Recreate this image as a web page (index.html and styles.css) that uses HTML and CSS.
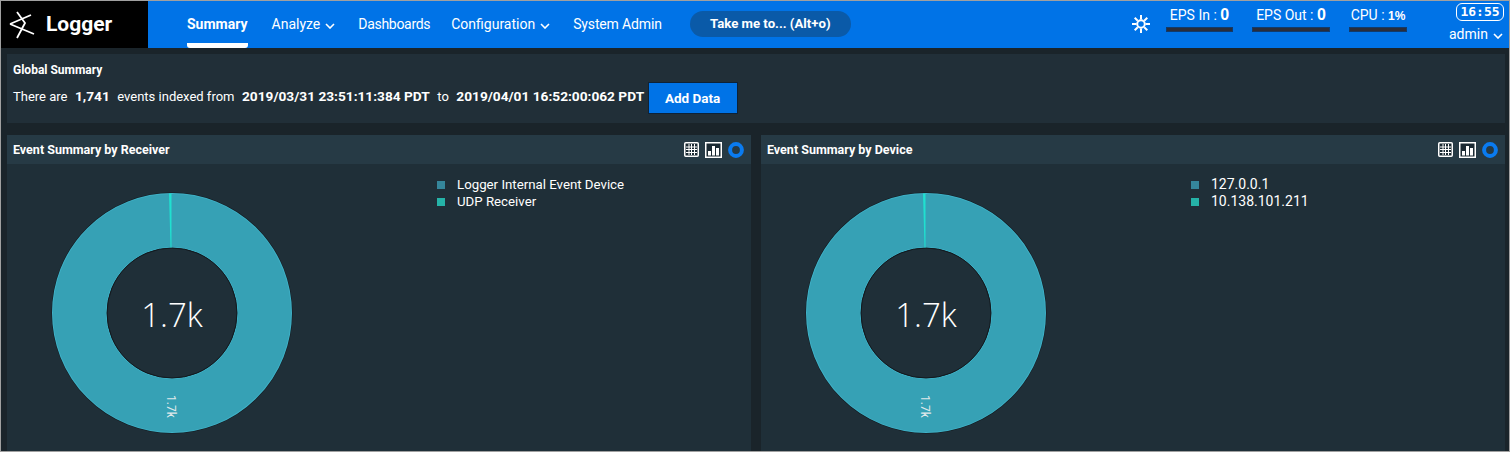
FILE: index.html
```html
<!DOCTYPE html>
<html lang="en">
<head>
    <meta charset="UTF-8">
    <meta name="viewport" content="width=device-width, initial-scale=1.0">
    <title>Logger Summary</title>
    <link rel="stylesheet" href="styles.css">
</head>
<body>
    <header class="topbar">
        <div class="brand">
            <svg class="brand-mark" width="26" height="28" viewBox="0 0 26 28">
                <path d="M1 13 L22 4 M1 13 L25 23 M8 1 L16 12 L8 27" fill="none" stroke="#fff" stroke-width="1.8"/>
            </svg>
            <span class="brand-name">Logger</span>
        </div>
        <nav class="nav">
            <a class="nav-item active">Summary</a>
            <a class="nav-item">Analyze <svg class="chev" width="10" height="6" viewBox="0 0 10 6"><path d="M1 1 L5 5 L9 1" fill="none" stroke="#fff" stroke-width="1.6"/></svg></a>
            <a class="nav-item nav-tight">Dashboards</a>
            <a class="nav-item">Configuration <svg class="chev" width="10" height="6" viewBox="0 0 10 6"><path d="M1 1 L5 5 L9 1" fill="none" stroke="#fff" stroke-width="1.6"/></svg></a>
            <a class="nav-item nav-last">System Admin</a>
        </nav>
        <button class="jump">Take me to... (Alt+o)</button>
        <div class="status">
            <svg class="sun" width="18" height="18" viewBox="0 0 20 20">
                <circle cx="10" cy="10" r="4.2" fill="none" stroke="#fff" stroke-width="2.2"/>
                <path d="M10 0 V5 M10 15 V20 M0 10 H5 M15 10 H20 M3 3 L6.4 6.4 M13.6 13.6 L17 17 M3 17 L6.4 13.6 M13.6 6.4 L17 3" stroke="#fff" stroke-width="2.2"/>
            </svg>
            <div class="meter meter-in">
                <div class="meter-label">EPS In : <b class="digits">0</b></div>
                <div class="meter-bar"></div>
            </div>
            <div class="meter meter-out">
                <div class="meter-label">EPS Out : <b class="digits">0</b></div>
                <div class="meter-bar"></div>
            </div>
            <div class="meter meter-cpu">
                <div class="meter-label">CPU : <b class="digits digits-cpu">1%</b></div>
                <div class="meter-bar"></div>
            </div>
            <div class="user">
                <div class="clock">16:55</div>
                <div class="admin">admin <svg class="chev" width="10" height="6" viewBox="0 0 10 6"><path d="M1 1 L5 5 L9 1" fill="none" stroke="#fff" stroke-width="1.6"/></svg></div>
            </div>
        </div>
    </header>

    <main class="content">
        <section class="global">
            <h2 class="global-title">Global Summary</h2>
            <div class="global-line">
                <span>There are</span>
                <b>1,741</b>
                <span>events indexed from</span>
                <b>2019/03/31 23:51:11:384 PDT</b>
                <span>to</span>
                <b>2019/04/01 16:52:00:062 PDT</b>
                <button class="add-data">Add Data</button>
            </div>
        </section>

        <div class="panels">
            <section class="panel">
                <div class="panel-head">
                    <h3 class="panel-title">Event Summary by Receiver</h3>
                    <svg class="tool" width="15" height="15" viewBox="0 0 15 15"><rect x="0.75" y="0.75" width="13.5" height="13.5" rx="1" fill="#1b2a33" stroke="#fff" stroke-width="1.5"/><path d="M2 5 H13 M2 7.5 H13 M2 10.5 H13 M5 2 V13 M7.5 2 V13 M10.5 2 V13" fill="none" stroke="#fff"/></svg>
                    <svg class="tool" width="17" height="16" viewBox="0 0 17 16"><rect x="0.75" y="0.75" width="15.5" height="14.5" fill="#1b2a33" stroke="#fff" stroke-width="1.5"/><path d="M3 9 H6 V13.5 H3 Z M7 4 H10 V13.5 H7 Z M11 6 H14 V13.5 H11 Z" fill="#fff"/></svg>
                    <svg class="tool" width="16" height="16" viewBox="0 0 16 16"><circle cx="8" cy="8" r="5.9" fill="none" stroke="#0a7bf0" stroke-width="4"/></svg>
                </div>
                <div class="panel-body">
                    <svg class="donut" width="242" height="242" viewBox="0 0 242 242">
                        <circle cx="121" cy="121" r="120.5" fill="#12191e"/>
                        <circle cx="121" cy="121" r="92.5" fill="none" stroke="#3fb0c6" stroke-width="55"/>
                        <circle cx="121" cy="121" r="92.5" fill="none" stroke="#36a1b5" stroke-width="53"/>
                        <circle cx="121" cy="121" r="65" fill="#1f2f38" stroke="#12191e"/>
                        <path d="M118 1.5 L120.5 1.5 L120.5 55.5 L119.5 55.5 Z" fill="#20e0d0"/>
                        <text class="donut-total" x="121" y="135" text-anchor="middle">1.7k</text>
                        <text class="donut-label" transform="translate(116 203) rotate(90)">1.7k</text>
                    </svg>
                    <ul class="legend">
                        <li><i class="swatch swatch-a"></i>Logger Internal Event Device</li>
                        <li><i class="swatch swatch-b"></i>UDP Receiver</li>
                    </ul>
                </div>
            </section>
            <section class="panel">
                <div class="panel-head">
                    <h3 class="panel-title">Event Summary by Device</h3>
                    <svg class="tool" width="15" height="15" viewBox="0 0 15 15"><rect x="0.75" y="0.75" width="13.5" height="13.5" rx="1" fill="#1b2a33" stroke="#fff" stroke-width="1.5"/><path d="M2 5 H13 M2 7.5 H13 M2 10.5 H13 M5 2 V13 M7.5 2 V13 M10.5 2 V13" fill="none" stroke="#fff"/></svg>
                    <svg class="tool" width="17" height="16" viewBox="0 0 17 16"><rect x="0.75" y="0.75" width="15.5" height="14.5" fill="#1b2a33" stroke="#fff" stroke-width="1.5"/><path d="M3 9 H6 V13.5 H3 Z M7 4 H10 V13.5 H7 Z M11 6 H14 V13.5 H11 Z" fill="#fff"/></svg>
                    <svg class="tool" width="16" height="16" viewBox="0 0 16 16"><circle cx="8" cy="8" r="5.9" fill="none" stroke="#0a7bf0" stroke-width="4"/></svg>
                </div>
                <div class="panel-body">
                    <svg class="donut" width="242" height="242" viewBox="0 0 242 242">
                        <circle cx="121" cy="121" r="120.5" fill="#12191e"/>
                        <circle cx="121" cy="121" r="92.5" fill="none" stroke="#3fb0c6" stroke-width="55"/>
                        <circle cx="121" cy="121" r="92.5" fill="none" stroke="#36a1b5" stroke-width="53"/>
                        <circle cx="121" cy="121" r="65" fill="#1f2f38" stroke="#12191e"/>
                        <path d="M118 1.5 L120.5 1.5 L120.5 55.5 L119.5 55.5 Z" fill="#20e0d0"/>
                        <text class="donut-total" x="121" y="135" text-anchor="middle">1.7k</text>
                        <text class="donut-label" transform="translate(116 203) rotate(90)">1.7k</text>
                    </svg>
                    <ul class="legend legend-ip">
                        <li><i class="swatch swatch-a"></i>127.0.0.1</li>
                        <li><i class="swatch swatch-b"></i>10.138.101.211</li>
                    </ul>
                </div>
            </section>
        </div>
    </main>
</body>
</html>
```
FILE: styles.css
```css
* { box-sizing: border-box; }
html, body { height: 100%; }
body { margin: 0; height: 452px; overflow: hidden; border: 1px solid #a0a0a0; background: #1a242a; color: #fff; font-family: Roboto, Arial, sans-serif; font-size: 13px; }

.topbar { display: flex; align-items: stretch; height: 47px; background: #0073e7; }
.brand { display: flex; align-items: center; width: 147px; padding-left: 8px; background: #000; }
.brand-name { margin: 0 0 1px 11px; font-size: 21px; font-weight: 700; }
.nav { display: flex; margin-left: 39px; }
.nav-item { display: flex; align-items: center; margin-right: 22px; padding-top: 4px; font-size: 14px; border-bottom: 5px solid transparent; }
.nav-item.active { margin-right: 24px; font-weight: 700; border-bottom-color: #fff; border-radius: 3px; }
.nav-tight { margin-right: 21px; letter-spacing: -0.3px; }
.nav-last { margin-right: 0; letter-spacing: -0.15px; }
.chev { margin: 4px 1px 0 5px; }
.jump { align-self: center; width: 161px; height: 26px; margin-left: 28px; margin-bottom: 2px; border: 0; border-radius: 13px; background: #0a5aa8; color: #fff; font: 700 13.2px Roboto, Arial, sans-serif; }

.status { display: flex; margin-left: auto; margin-right: 3px; }
.sun { margin: 14px 16px 0 0; }
.meter { margin-right: 19px; padding-top: 4px; }
.meter-in { width: 67px; }
.meter-out { width: 78px; }
.meter-cpu { width: 58px; margin-right: 43px; }
.meter-label { height: 22px; font-size: 14px; line-height: 20px; white-space: nowrap; text-align: center; }
.digits { font-family: "Liberation Sans", sans-serif; font-size: 16px; }
.digits-cpu { font-size: 12px; }
.meter-bar { height: 5px; background: #2a2d3a; border: 1px solid #123a6a; }
.user { width: 56px; padding-top: 2px; }
.clock { height: 18px; margin: 0 2px 0 6px; border: 1px solid #fff; border-radius: 6px; font: 700 13px/16px "DejaVu Sans Mono", monospace; text-align: center; }
.admin { margin: 5px 0 0 -1px; font-size: 14px; white-space: nowrap; }
.admin .chev { margin-left: 2px; }

.content { padding: 6px 4px 0 6px; }
.global { height: 69px; padding: 9px 6px; background: #212f38; }
.global-title { margin: 0; font-size: 12px; font-weight: 700; line-height: 15px; }
.global-line { display: flex; align-items: center; gap: 7.5px; margin-top: 4px; font-size: 13px; }
.global-line span, .global-line b { margin-bottom: 4px; }
.global-line b { font-size: 13.7px; }
.add-data { width: 90px; height: 32px; margin-left: -4px; border: 1px solid #0d2238; background: #0073e7; color: #fff; font: 700 13.5px Roboto, Arial, sans-serif; }

.panels { display: grid; grid-template-columns: 744px 744px; gap: 10px; margin-top: 12px; }
.panel { height: 330px; background: #1f2f38; }
.panel-head { display: flex; align-items: center; gap: 6px; height: 29px; padding: 0 7px 0 6px; background: #263a45; }
.panel-title { margin: 0 auto 0 0; font-size: 12.5px; font-weight: 700; }
.tool { flex: none; }
.panel-body { display: flex; padding: 12px 0 0 44px; }
.donut { margin-top: 16px; flex: none; }
.donut-total { fill: #fff; font-family: "Open Sans", sans-serif; font-size: 33px; font-weight: 300; }
.donut-label { fill: #dfe8ea; font-family: Roboto, sans-serif; font-size: 12px; }
.legend { margin: 0 0 0 144px; padding: 0; list-style: none; font-size: 13.25px; line-height: 17px; }
.legend-ip { font-size: 14px; }
.legend li { display: flex; align-items: center; }
.swatch { width: 8px; height: 8px; margin-right: 12px; }
.swatch-a { background: #35869b; }
.swatch-b { background: #25b3a8; }
```
